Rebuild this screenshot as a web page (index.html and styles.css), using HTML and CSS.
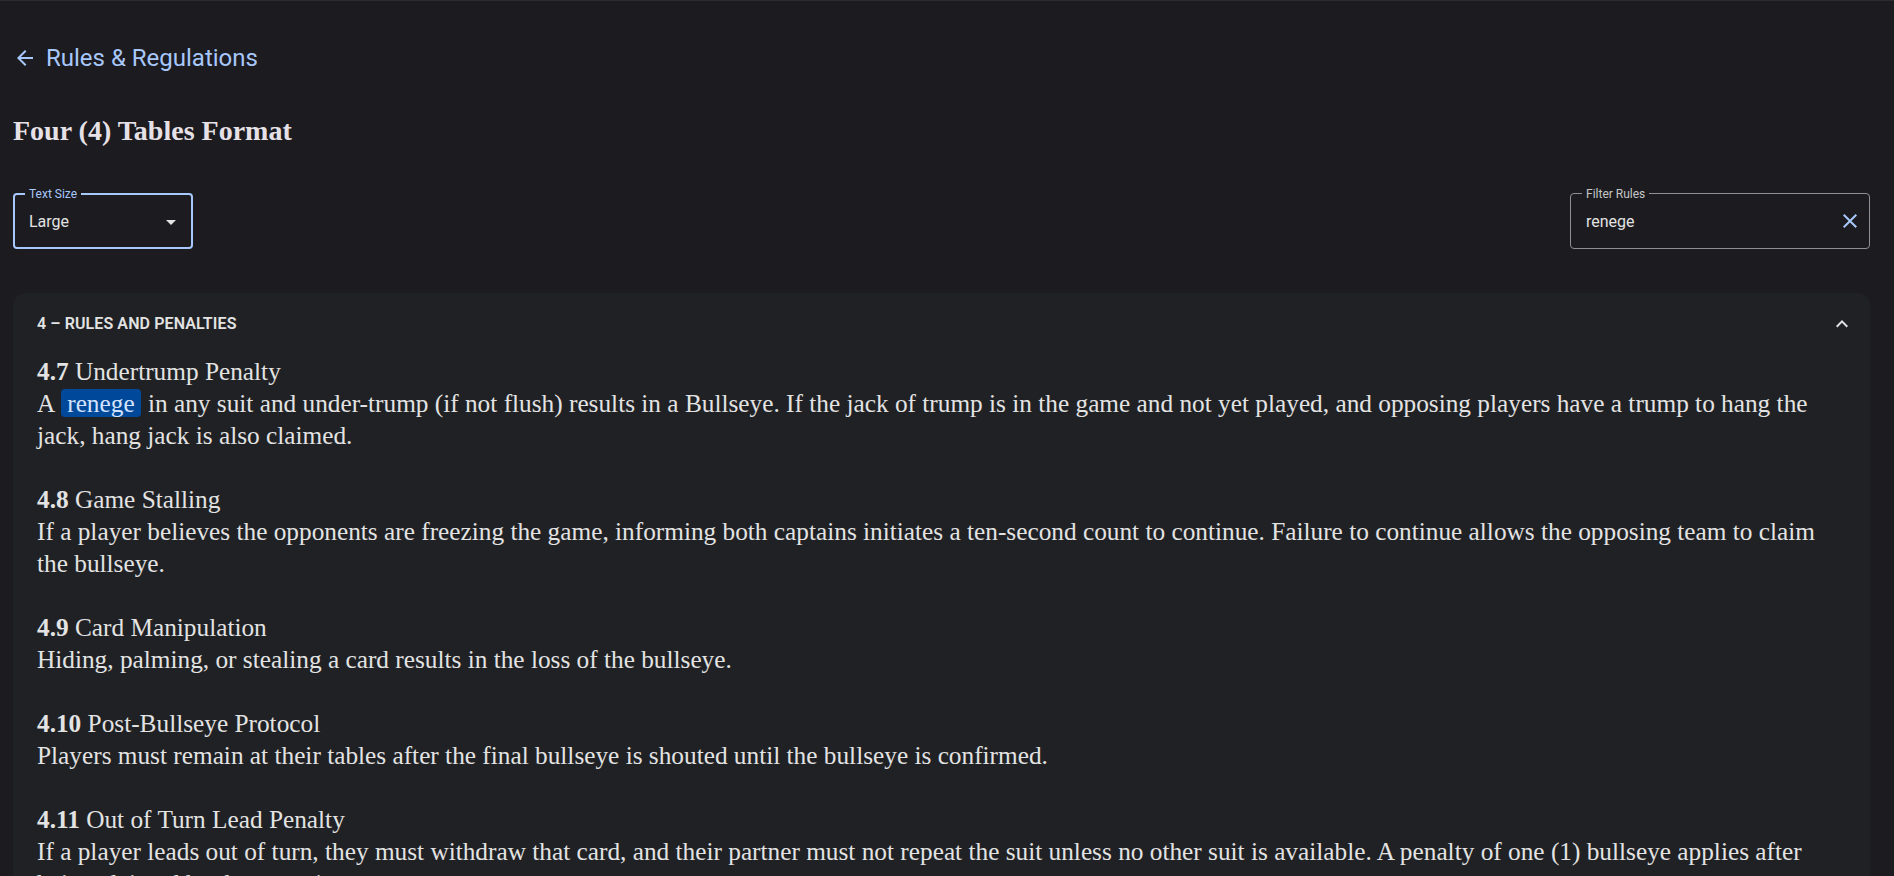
FILE: index.html
```html
<!DOCTYPE html>
<html lang="en">
<head>
<meta charset="utf-8">
<title>Four (4) Tables Format</title>
<link rel="stylesheet" href="styles.css">
</head>
<body>
<div class="page">
  <a class="back" href="#">
    <svg class="icon" viewBox="0 0 24 24"><path d="M20 11H7.83l5.59-5.59L12 4l-8 8 8 8 1.41-1.41L7.83 13H20v-2z"/></svg>
    <span class="back-text">Rules &amp; Regulations</span>
  </a>

  <h1 class="title">Four (4) Tables Format</h1>

  <div class="controls">
    <div class="field field-select">
      <span class="field-label field-label-focused">Text Size</span>
      <span class="field-value">Large</span>
      <svg class="icon icon-light" viewBox="0 0 24 24"><path d="M7 10l5 5 5-5z"/></svg>
    </div>
    <div class="field field-filter">
      <span class="field-label">Filter Rules</span>
      <span class="field-value">renege</span>
      <svg class="icon icon-blue" viewBox="0 0 24 24"><path d="M19 6.41 17.59 5 12 10.59 6.41 5 5 6.41 10.59 12 5 17.59 6.41 19 12 13.41 17.59 19 19 17.59 13.41 12z"/></svg>
    </div>
  </div>

  <section class="card">
    <div class="card-head">
      <span class="card-head-text">4 – RULES AND PENALTIES</span>
      <svg class="icon icon-light" viewBox="0 0 24 24"><path d="M12 8l-6 6 1.41 1.41L12 10.83l4.59 4.58L18 14z"/></svg>
    </div>
    <div class="card-body">
      <div class="rule">
        <p class="rule-title"><b>4.7</b> Undertrump Penalty</p>
        <p class="rule-text"><span>A</span> <mark class="hit">renege</mark> <span>in any suit and under-trump (if not flush) results in a Bullseye. If the jack of trump is in the game and not yet played, and opposing players have a trump to hang the jack, hang jack is also claimed.</span></p>
      </div>
      <div class="rule">
        <p class="rule-title"><b>4.8</b> Game Stalling</p>
        <p class="rule-text">If a player believes the opponents are freezing the game, informing both captains initiates a ten-second count to continue. Failure to continue allows the opposing team to claim the bullseye.</p>
      </div>
      <div class="rule">
        <p class="rule-title"><b>4.9</b> Card Manipulation</p>
        <p class="rule-text">Hiding, palming, or stealing a card results in the loss of the bullseye.</p>
      </div>
      <div class="rule">
        <p class="rule-title"><b>4.10</b> Post-Bullseye Protocol</p>
        <p class="rule-text">Players must remain at their tables after the final bullseye is shouted until the bullseye is confirmed.</p>
      </div>
      <div class="rule">
        <p class="rule-title"><b>4.11</b> Out of Turn Lead Penalty</p>
        <p class="rule-text">If a player leads out of turn, they must withdraw that card, and their partner must not repeat the suit unless no other suit is available. A penalty of one (1) bullseye applies after being claimed by the opposing team.</p>
      </div>
    </div>
  </section>
</div>
</body>
</html>
```

FILE: styles.css
```css
html, body {
  margin: 0;
  padding: 0;
}

body {
  background: #1c1b20;
  border-top: 1px solid #2b2b31;
  color: #e3e3e3;
  font-family: Roboto, "Liberation Sans", sans-serif;
  overflow: hidden;
  height: 875px;
}

.page {
  padding: 45px 24px 0 13px;
}

.icon {
  width: 24px;
  height: 24px;
  flex: none;
  fill: currentColor;
}

.icon-light { color: #e3e3e3; }
.icon-blue { color: #a8c7fa; }

.back {
  display: flex;
  align-items: center;
  color: #a8c7fa;
  text-decoration: none;
  height: 24px;
}

.back-text {
  margin-left: 9px;
  font-size: 24px;
  line-height: 24px;
}

.title {
  margin: 43px 0 0;
  font-family: "Liberation Serif", serif;
  font-weight: 700;
  font-size: 28px;
  line-height: 36px;
  color: #e6e1e6;
}

.controls {
  margin-top: 44px;
  display: flex;
  justify-content: space-between;
}

.field {
  position: relative;
  box-sizing: border-box;
  height: 56px;
  display: flex;
  align-items: center;
  border-radius: 4px;
}

.field-select {
  width: 180px;
  border: 2px solid #a8c7fa;
  padding: 2px 8px 0 14px;
}

.field-filter {
  width: 300px;
  border: 1px solid #8e9093;
  padding: 2px 7px 0 15px;
}

.field-filter .icon {
  margin-top: -2px;
}

.field-value {
  flex: 1;
  font-size: 16px;
  line-height: 24px;
  color: #e3e3e3;
}

.field-label {
  position: absolute;
  top: -8px;
  left: 11px;
  padding: 0 4px;
  font-size: 12px;
  line-height: 16px;
  color: #c4c7c5;
  background: #1c1b20;
}

.field-label-focused {
  top: -9px;
  left: 10px;
  color: #a8c7fa;
}

.card {
  margin-top: 44px;
  background: #202124;
  border-radius: 12px;
  min-height: 700px;
}

.card-head {
  height: 62px;
  display: flex;
  align-items: center;
  justify-content: space-between;
  padding: 0 16px 0 24px;
}

.card-head-text {
  font-size: 16px;
  font-weight: 600;
  letter-spacing: 0.1px;
  line-height: 20px;
  color: #e3e3e3;
}

.card-body {
  padding: 0 24px 16px 24px;
  font-family: "Liberation Serif", serif;
  font-size: 25.3px;
  line-height: 32px;
  color: #e3e3e3;
}

.rule {
  margin-bottom: 32px;
}

.rule-title,
.rule-text {
  margin: 0;
}

.hit {
  display: inline-block;
  line-height: 28px;
  margin: 0 1px;
  background: #00489a;
  color: #d3e3fd;
  border-radius: 4px;
  padding: 0 6px;
}
```
